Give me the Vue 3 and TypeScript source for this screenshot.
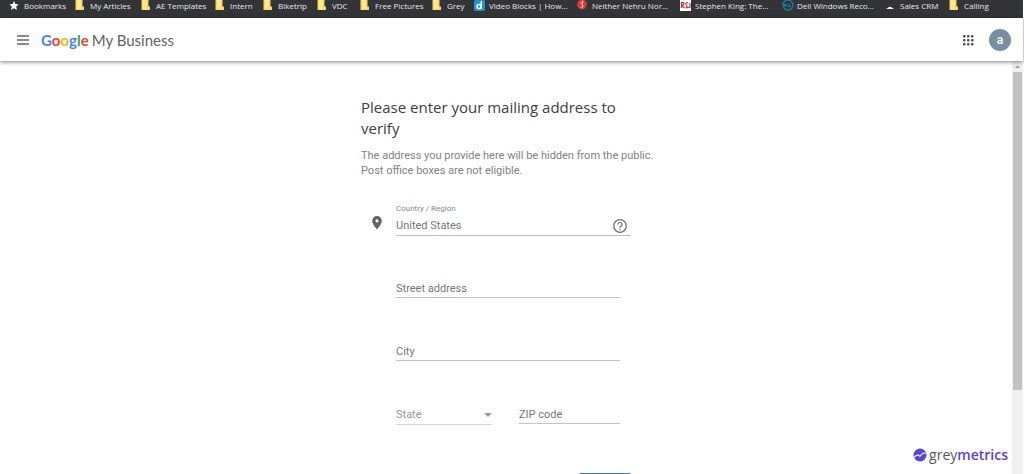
<script setup lang="ts">
import { ref } from 'vue'

interface Bookmark {
  label: string
  icon: 'star' | 'folder' | 'video' | 'round' | 'rs' | 'dell' | 'crm'
  width: number
}

const bookmarks: Bookmark[] = [
  { label: 'Bookmarks', icon: 'star', width: 66 },
  { label: 'My Articles', icon: 'folder', width: 66 },
  { label: 'AE Templates', icon: 'folder', width: 74 },
  { label: 'Intern', icon: 'folder', width: 48 },
  { label: 'Biketrip', icon: 'folder', width: 54 },
  { label: 'VDC', icon: 'folder', width: 43 },
  { label: 'Free Pictures', icon: 'folder', width: 72 },
  { label: 'Grey', icon: 'folder', width: 42 },
  { label: 'Video Blocks | How...', icon: 'video', width: 103 },
  { label: 'Neither Nehru Nor...', icon: 'round', width: 103 },
  { label: 'Stephen King: The...', icon: 'rs', width: 102 },
  { label: 'Dell Windows Reco...', icon: 'dell', width: 103 },
  { label: 'Sales CRM', icon: 'crm', width: 64 },
  { label: 'Calling', icon: 'folder', width: 50 },
]

const country = ref('United States')
const street = ref('')
const city = ref('')
const state = ref('')
const zip = ref('')
</script>

<template>
  <div class="page">
    <nav class="bookmarks" aria-label="Bookmarks">
      <a v-for="b in bookmarks" :key="b.label" href="#" class="bookmark" :style="{ width: b.width + 'px' }">
        <svg class="bm-icon" viewBox="0 0 12 12" aria-hidden="true">
          <path v-if="b.icon === 'star'" fill="#fff" d="M5 1l1.400 3 3.200.4-2.400 2.200.7 3.300L5 8.300 2.100 9.900l.7-3.300L.4 4.400 3.600 4z" />
          <template v-else-if="b.icon === 'folder'">
            <path fill="#f6d867" d="M.5 0h7v6.500H9V10H.5z" />
            <path fill="#ffe890" d="M2 0h4v9H2z" />
          </template>
          <template v-else-if="b.icon === 'video'">
            <rect width="11" height="11" rx="2" fill="#2593d1" />
            <circle cx="5" cy="6.500" r="2" fill="none" stroke="#fff" stroke-width="1.400" />
            <path d="M7.300 1v8" stroke="#fff" stroke-width="1.400" />
          </template>
          <template v-else-if="b.icon === 'round'">
            <circle cx="5" cy="4.500" r="5" fill="#d23b35" />
            <path d="M6.800 2C4 1 3 3.500 5 4.500S6 8 3.300 7M5.500 .5v8" fill="none" stroke="#f5c7c2" stroke-width=".8" />
          </template>
          <template v-else-if="b.icon === 'rs'">
            <path fill="#fff" d="M0 0h11v11H0z" />
            <path d="M1.500 8V2.500h2q1.500 1.500-1.500 3L4.500 8M8 3Q5.500 2 6 4.500T8 7.500L5.500 8M10 3v5" fill="none" stroke="#cb2d3a" stroke-width="1.200" />
          </template>
          <template v-else-if="b.icon === 'dell'">
            <circle cx="6" cy="5" r="5" fill="none" stroke="#177fa8" stroke-width="1.300" />
            <path d="M2.500 4v2.500L4 5.200zM5 4v2.500h1.500M7.500 4v2.500H9" fill="none" stroke="#177fa8" />
          </template>
          <path v-else fill="#e8f4f2" d="M1 9q1-1 2-1 1-2 3-1l3 2z" />
        </svg>
        <span>{{ b.label }}</span>
      </a>
    </nav>

    <header class="header">
      <button class="icon-button" type="button" aria-label="Main menu">
        <svg width="12" height="10" viewBox="0 0 12 10"><path d="M0 1h12M0 5h12M0 9h12" stroke="#666" stroke-width="1.300" /></svg>
      </button>
      <a class="brand" href="#"><span class="google"><span class="blue">G</span><span class="red">o</span><span class="yellow">o</span><span class="blue">g</span><span class="green">l</span><span class="red">e</span></span><span class="product">My Business</span></a>
      <button class="icon-button apps" type="button" aria-label="Apps">
        <svg width="12" height="12" viewBox="0 0 12 12" fill="#505357">
          <template v-for="y in 3" :key="y">
            <rect v-for="x in 3" :key="x" :x="(x - 1) * 4 + 1" :y="(y - 1) * 4 + 1" width="2.500" height="2.500" rx=".7" />
          </template>
        </svg>
      </button>
      <button class="avatar" type="button" aria-label="Account">a</button>
    </header>

    <div class="body">
      <main class="content">
        <form class="form" @submit.prevent>
          <h1>Please enter your mailing address to verify</h1>
          <p>The address you provide here will be hidden from the public.<br />Post office boxes are not eligible.</p>

          <div class="country-row">
            <svg class="pin" width="10" height="14" viewBox="0 0 10 14" aria-hidden="true">
              <path fill="#5f6368" fill-rule="evenodd" d="M5 0a4.800 4.800 0 0 0-4.800 4.800C.2 8.300 5 13.500 5 13.500s4.800-5.200 4.800-8.700A4.800 4.800 0 0 0 5 0zm0 3.200a1.600 1.600 0 1 1 0 3.200 1.600 1.600 0 0 1 0-3.200z" />
            </svg>
            <div class="country-field">
              <label for="country">Country / Region</label>
              <div class="country-line">
                <input id="country" v-model="country" type="text" />
                <button class="icon-button" type="button" aria-label="Help">
                  <svg width="14" height="14" viewBox="0 0 14 14" fill="none" stroke="#6c6f73">
                    <circle cx="7" cy="7" r="6.300" stroke-width="1.300" />
                    <path d="M4.900 5.500a2.100 2.100 0 1 1 3.400 1.600C7.400 7.700 7 8 7 9" stroke-width="1.200" />
                    <path d="M7 10v1.300" stroke-width="1.300" />
                  </svg>
                </button>
              </div>
            </div>
          </div>

          <div class="fields">
            <input v-model="street" class="line" type="text" placeholder="Street address" aria-label="Street address" />
            <input v-model="city" class="line" type="text" placeholder="City" aria-label="City" />
            <div class="pair">
              <div class="select">
                <select v-model="state" aria-label="State">
                  <option value="">State</option>
                </select>
                <svg width="8" height="4" viewBox="0 0 8 4" aria-hidden="true"><path fill="#999" d="M0 0h8L4 4z" /></svg>
              </div>
              <input v-model="zip" class="line" type="text" placeholder="ZIP code" aria-label="ZIP code" />
            </div>
          </div>
          <button class="next" type="submit" aria-label="Next"></button>
        </form>
      </main>
      <div class="scrollbar" aria-hidden="true">
        <svg width="11" height="11" viewBox="0 0 11 11"><path fill="#999" d="M3 7h5L5.500 4.500z" /></svg>
        <div class="thumb"></div>
      </div>
    </div>

    <div class="watermark">
      <svg width="14" height="14" viewBox="0 0 14 14" aria-hidden="true">
        <circle cx="7" cy="7" r="6.500" fill="#5a43dc" />
        <path d="M1 9l3.500-2.200 2.500 1.500L9.500 5.500 14 4.800" fill="none" stroke="#fff" stroke-width="1.100" />
      </svg>
      <span>grey<b>metrics</b></span>
    </div>
  </div>
</template>

<style>
body {
  margin: 0;
}
</style>

<style scoped>
* {
  box-sizing: border-box;
}

.page {
  position: relative;
  display: flex;
  flex-direction: column;
  height: 100vh;
  overflow: hidden;
  padding-right: 1px;
  background: #fff;
  font-family: Roboto, sans-serif;
}

.bookmarks {
  display: flex;
  flex: none;
  height: 18px;
  padding-left: 9px;
  overflow: hidden;
  background: #333437;
}

.bookmark {
  display: flex;
  flex: none;
  gap: 3px;
  height: 11px;
  color: #e8e8e9;
  font: 8px/11px "Open Sans", sans-serif;
  text-decoration: none;
  white-space: nowrap;
}

.bm-icon {
  flex: none;
  width: 12px;
  height: 12px;
}

.header {
  position: relative;
  display: flex;
  flex: none;
  align-items: center;
  height: 43px;
  padding: 0 12px 0 17px;
  background: #fff;
  box-shadow: 0 1px 4px rgba(0, 0, 0, 0.5);
}

button {
  padding: 0;
  border: 0;
  cursor: pointer;
}

.icon-button {
  display: flex;
  background: none;
}

.brand {
  display: flex;
  gap: 3px;
  margin-left: 12px;
  font: 15px/20px Lato, sans-serif;
  text-decoration: none;
}

.google {
  font-weight: 700;
}

.blue { color: #4285f4; }
.red { color: #ea4335; }
.yellow { color: #fbbc05; }
.green { color: #34a853; }
.product { color: #5f6368; }

.apps {
  margin-left: auto;
}

.avatar {
  width: 22px;
  height: 22px;
  margin-left: 15px;
  border-radius: 50%;
  background: #78909c;
  color: #fff;
  font: 500 12px/20px Roboto, sans-serif;
}

.body {
  display: flex;
  flex: 1;
  min-height: 0;
}

.content {
  flex: 1;
  overflow: hidden;
}

.form {
  width: 100%;
  max-width: 290px;
  margin: 0 auto;
  padding-top: 36px;
}

h1 {
  margin: 0;
  color: #3c4043;
  font: 15px/21px "Open Sans", sans-serif;
}

p {
  margin: 9px 0 0;
  color: #808286;
  font-size: 11px;
  line-height: 15px;
  white-space: nowrap;
}

.country-row {
  display: flex;
  gap: 14px;
  margin-top: 26px;
  padding: 0 20px 0 11px;
}

.pin {
  flex: none;
  margin-top: 12px;
}

.country-field {
  flex: 1;
  border-bottom: 1px solid #bfbfbf;
}

label {
  display: block;
  color: #85878a;
  font-size: 8px;
  line-height: 10px;
}

.country-line {
  display: flex;
  align-items: flex-end;
  height: 21px;
  padding-right: 4px;
}

.country-line .icon-button {
  padding-bottom: 2px;
}

input,
select {
  min-width: 0;
  margin: 0;
  padding: 0;
  border: 0;
  border-radius: 0;
  outline: 0;
  background: none;
  color: #777;
  font: 11px/18px Roboto, sans-serif;
}

.country-line input {
  flex: 1;
}

input::placeholder {
  color: #777;
  opacity: 1;
}

.fields {
  display: flex;
  flex-direction: column;
  gap: 44px;
  margin-top: 43px;
  padding: 0 31px 0 35px;
}

.line {
  width: 100%;
  height: 19px;
  border-bottom: 1px solid #c4c4c4;
}

.pair {
  display: grid;
  grid-template-columns: 96px 1fr;
  align-items: start;
  gap: 27px;
}

.select {
  display: flex;
  align-items: center;
  height: 20px;
  border-bottom: 1px solid #d6d6d6;
}

select {
  flex: 1;
  appearance: none;
  color: #999;
}

.next {
  display: block;
  width: 52px;
  height: 24px;
  margin: 48px 20px 0 auto;
  border-radius: 2px;
  background: #4479cf;
}

.scrollbar {
  display: flex;
  flex: none;
  flex-direction: column;
  width: 11px;
  background: #f0f0f0;
}

.thumb {
  height: 77%;
  margin: 0 1px;
  background: #c2c2c2;
}

.watermark {
  position: absolute;
  right: 16px;
  bottom: 9px;
  display: flex;
  align-items: center;
  gap: 2px;
  color: #58585a;
  font: 14px/20px "Open Sans", sans-serif;
}

.watermark b {
  color: #5a43dc;
  font-weight: 600;
}
</style>
